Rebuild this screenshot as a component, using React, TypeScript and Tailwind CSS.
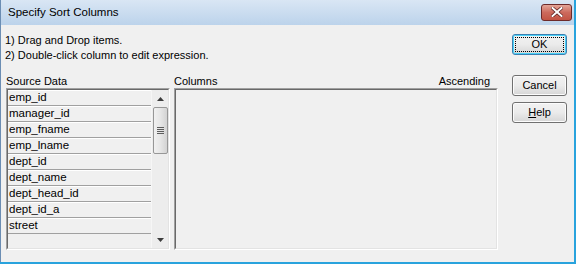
import React from 'react';

const items = [
  'emp_id',
  'manager_id',
  'emp_fname',
  'emp_lname',
  'dept_id',
  'dept_name',
  'dept_head_id',
  'dept_id_a',
  'street',
];

const font = { fontFamily: '"Liberation Sans", Arial, sans-serif' };

const Button = ({ children, focused = false }: { children: React.ReactNode; focused?: boolean }) => (
  <div
    className={`h-[21px] w-[55px] rounded-[3px] border ${
      focused ? 'border-[#3c7fb1] shadow-[inset_0_0_0_1px_#48d2f9]' : 'border-[#707070] shadow-[inset_0_0_0_1px_#fcfcfc]'
    } bg-gradient-to-b from-[#f2f2f2] via-[#ebebeb] to-[#d6d6d6] flex items-center justify-center p-[2px]`}
  >
    <div
      className={`w-full h-full flex items-center justify-center text-[11px] text-black ${
        focused ? 'border border-dotted border-black' : ''
      }`}
    >
      {children}
    </div>
  </div>
);

const ScrollBar = () => (
  <div className="w-[17px] h-full bg-[#ededed] border-l border-[#f6f6f6] flex flex-col items-center">
    <div className="h-[17px] w-full flex items-center justify-center">
      <svg width="7" height="4" viewBox="0 0 7 4">
        <path d="M3.5 0 L7 4 L0 4 Z" fill="#3c3c3c" />
      </svg>
    </div>
    <div className="h-[47px] w-[15px] rounded-[2px] border border-[#979797] bg-gradient-to-r from-[#f1f1f1] via-[#e6e6e6] to-[#d3d3d3] flex flex-col items-center justify-center gap-[1px]">
      <div className="w-[7px] h-[1px] bg-[#5c5c5c]" />
      <div className="w-[7px] h-[1px] bg-[#5c5c5c]" />
      <div className="w-[7px] h-[1px] bg-[#5c5c5c]" />
      <div className="w-[7px] h-[1px] bg-[#5c5c5c]" />
    </div>
    <div className="flex-1" />
    <div className="h-[17px] w-full flex items-center justify-center">
      <svg width="7" height="4" viewBox="0 0 7 4">
        <path d="M0 0 L7 0 L3.5 4 Z" fill="#3c3c3c" />
      </svg>
    </div>
  </div>
);

export default function App() {
  return (
    <div className="w-[576px] h-[264px] flex flex-col bg-[#bcd3eb] border-r-2 border-b-2 border-[#29a3dd] overflow-hidden" style={font}>
      {/* title bar */}
      <div className="h-[25px] shrink-0 flex items-center justify-between pl-[7px] pr-[2px] bg-gradient-to-b from-[#d9e6f4] to-[#bcd3eb] border-l border-[#6b8db3]">
        <span className="text-[11.5px] text-black">Specify Sort Columns</span>
        <div className="w-[31px] h-[17px] rounded-[3px] border border-[#6d2a2a] bg-gradient-to-b from-[#e3a598] via-[#cc6a5d] to-[#c25444] flex items-center justify-center mt-[-1px]">
          <svg width="12" height="10" viewBox="0 0 12 10">
            <path d="M1.5 1 L10.5 9 M10.5 1 L1.5 9" stroke="#5a2020" strokeWidth="3.4" strokeLinecap="square" />
            <path d="M1.5 1 L10.5 9 M10.5 1 L1.5 9" stroke="#ffffff" strokeWidth="2" strokeLinecap="square" />
          </svg>
        </div>
      </div>

      {/* client area */}
      <div className="flex-1 bg-[#f0f0f0] flex border-l border-[#6b8db3]">
        <div className="w-[507px] flex flex-col pl-[4px] pt-[8px]">
          <div className="text-[11px] leading-[15px] text-black">
            <div>1) Drag and Drop items.</div>
            <div>2) Double-click column to edit expression.</div>
          </div>

          <div className="flex gap-[4px] mt-[12px] pl-[1px]">
            <div className="w-[164px] text-[11px] leading-[13px] text-black">Source Data</div>
            <div className="w-[316px] flex justify-between text-[11px] leading-[13px] text-black">
              <span>Columns</span>
              <span>Ascending</span>
            </div>
          </div>

          <div className="flex gap-[4px] pl-[1px]">
            {/* source list */}
            <div className="w-[164px] h-[162px] border border-[#a0a0a0] border-r-white border-b-white">
              <div className="w-full h-full border border-[#696969] border-r-[#e3e3e3] border-b-[#e3e3e3] flex">
                <div className="flex-1 flex flex-col">
                  {items.map((it) => (
                    <div
                      key={it}
                      className="h-[16px] border-t border-white border-b border-b-[#a0a0a0] flex items-center text-[11.5px] text-black pl-[1px]"
                    >
                      {it}
                    </div>
                  ))}
                </div>
                <ScrollBar />
              </div>
            </div>

            {/* columns list */}
            <div className="w-[324px] h-[162px] border border-[#a0a0a0] border-r-white border-b-white">
              <div className="w-full h-full border border-[#696969] border-r-[#e3e3e3] border-b-[#e3e3e3]" />
            </div>
          </div>
        </div>

        <div className="flex flex-col pl-[4px] pt-[9px]">
          <Button focused>OK</Button>
          <div className="mt-[20px]">
            <Button>Cancel</Button>
          </div>
          <div className="mt-[6px]">
            <Button>
              <span>
                <span className="underline">H</span>elp
              </span>
            </Button>
          </div>
        </div>
      </div>
    </div>
  );
}
